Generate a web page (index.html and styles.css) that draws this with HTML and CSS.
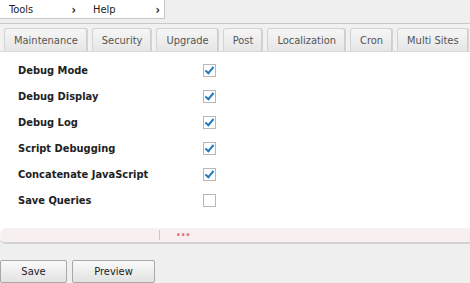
FILE: index.html
```html
<!DOCTYPE html>
<html lang="en">
<head>
    <meta charset="UTF-8">
    <title>Debug Settings</title>
    <link rel="stylesheet" href="styles.css">
</head>
<body>
    <div class="menubar">
        <span class="menu-item">Tools <span class="arrow">›</span></span>
        <span class="menu-item">Help <span class="arrow">›</span></span>
    </div>

    <div class="panel">
        <div class="tabs">
            <span class="tab">Maintenance</span>
            <span class="tab">Security</span>
            <span class="tab">Upgrade</span>
            <span class="tab">Post</span>
            <span class="tab">Localization</span>
            <span class="tab">Cron</span>
            <span class="tab">Multi Sites</span>
            <span class="tab tab-more"></span>
        </div>

        <div class="content">
            <div class="row"><label>Debug Mode</label><span class="check on"></span></div>
            <div class="row"><label>Debug Display</label><span class="check on"></span></div>
            <div class="row"><label>Debug Log</label><span class="check on"></span></div>
            <div class="row"><label>Script Debugging</label><span class="check on"></span></div>
            <div class="row"><label>Concatenate JavaScript</label><span class="check on"></span></div>
            <div class="row"><label>Save Queries</label><span class="check"></span></div>

            <div class="statusbar">
                <span class="status-left"></span>
                <span class="dots">···</span>
            </div>
        </div>
    </div>

    <div class="actions">
        <button class="btn save">Save</button>
        <button class="btn preview">Preview</button>
    </div>
</body>
</html>
```

FILE: styles.css
```css
/* page */
body {
    margin: 0;
    background-color: #efefef;
    font-family: "DejaVu Sans Condensed", "DejaVu Sans", Verdana, sans-serif;
    font-size: 11px;
    color: #222;
    overflow: hidden;
}

/* top menu */
.menubar {
    display: flex;
    width: 164px;
    height: 18px;
    background-color: #ffffff;
    border-right: 1px solid #c8c8c8;
    border-bottom: 1px solid #c8c8c8;
    overflow: hidden;
}

.menu-item {
    flex: none;
    display: flex;
    justify-content: space-between;
    align-items: center;
    width: 67px;
    padding: 1px 8px 0 9px;
    color: #222;
}

.arrow {
    font-weight: bold;
    font-size: 12px;
}

/* panel with tabs */
.panel {
    margin-top: 4px;
    border-top: 1px solid #c8c8c8;
    border-bottom: 2px solid #d2d2d2;
    border-radius: 0 0 0 6px;
    background-color: #ffffff;
}

.tabs {
    display: flex;
    gap: 4px;
    padding: 4px 0 0 4px;
    background-color: #f1f1f1;
    border-bottom: 1px solid #d8d8d8;
    white-space: nowrap;
    overflow: hidden;
}

.tab {
    flex: none;
    height: 22px;
    line-height: 23px;
    padding: 0 9px;
    color: #555;
    background: linear-gradient(#f6f6f6, #e6e6e6);
    border: 1px solid #d2d2d2;
    border-bottom: none;
    border-radius: 3px 3px 0 0;
    box-shadow: inset -1px 0 0 #cfcfcf;
}

.tab-more {
    width: 40px;
}

/* rows */
.content {
    padding-top: 5px;
}

.row {
    display: flex;
    align-items: center;
    height: 26px;
    padding-left: 18px;
}

.row label {
    width: 185px;
    font-weight: bold;
    color: #222;
}

.check {
    width: 11px;
    height: 11px;
    border: 1px solid #b8b8b8;
    background-color: #fff;
    position: relative;
}

.check.on::after {
    content: "";
    position: absolute;
    left: 3px;
    top: 0px;
    width: 3px;
    height: 7px;
    border-right: 2px solid #1e7bbf;
    border-bottom: 2px solid #1e7bbf;
    transform: rotate(40deg);
}

/* status bar */
.statusbar {
    display: flex;
    align-items: center;
    height: 14px;
    margin: 15px 0 0 0;
    background-color: #f8f0f0;
    border-radius: 7px 0 0 7px;
}

.status-left {
    width: 159px;
    height: 10px;
    border-right: 1px solid #c8c8c8;
}

.dots {
    margin-left: 16px;
    color: #e8707c;
    font-size: 14px;
    font-weight: bold;
    letter-spacing: 0;
}

/* buttons */
.actions {
    display: flex;
    gap: 5px;
    margin-top: 16px;
}

.btn {
    height: 23px;
    padding: 0;
    font-family: "DejaVu Sans Condensed", "DejaVu Sans", Verdana, sans-serif;
    font-size: 11px;
    color: #222;
    background: linear-gradient(#fafafa, #e2e2e2);
    border: 1px solid #a8a8a8;
    border-radius: 2px;
}

.save {
    width: 67px;
}

.preview {
    width: 83px;
}
```
